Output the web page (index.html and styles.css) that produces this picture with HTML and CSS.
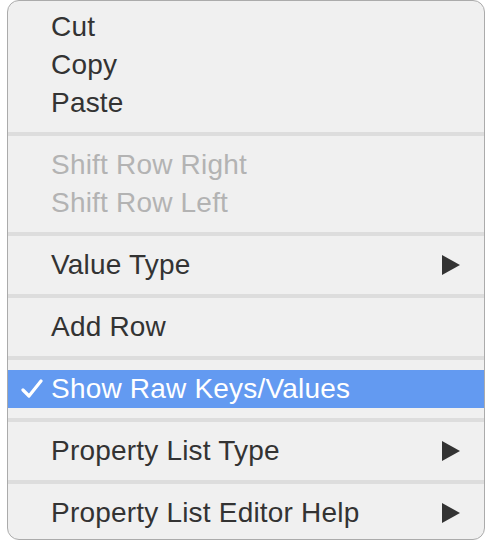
FILE: index.html
```html
<!DOCTYPE html>
<html lang="en">
<head>
    <meta charset="UTF-8">
    <title>Context Menu</title>
    <link rel="stylesheet" href="styles.css">
</head>
<body>
    <div class="menu">
        <div class="item">Cut</div>
        <div class="item">Copy</div>
        <div class="item">Paste</div>
        <div class="separator"></div>
        <div class="item disabled">Shift Row Right</div>
        <div class="item disabled">Shift Row Left</div>
        <div class="separator"></div>
        <div class="item">Value Type <span class="arrow"></span></div>
        <div class="separator"></div>
        <div class="item">Add Row</div>
        <div class="separator"></div>
        <div class="item selected">
            <svg class="check" width="22" height="20" viewBox="0 0 22 20">
                <path d="M2 11 L8 17 L20 2" fill="none" stroke="#fff" stroke-width="3.2" stroke-linecap="round" stroke-linejoin="round"/>
            </svg>
            Show Raw Keys/Values
        </div>
        <div class="separator"></div>
        <div class="item">Property List Type <span class="arrow"></span></div>
        <div class="separator"></div>
        <div class="item">Property List Editor Help <span class="arrow"></span></div>
    </div>
</body>
</html>
```

FILE: styles.css
```css
body {
    margin: 0;
    background: #fff;
    font-family: "Liberation Sans", Arial, sans-serif;
}

.menu {
    margin-left: 7px;
    width: 478px;
    height: 540px;
    box-sizing: border-box;
    background: #f0f0f0;
    border: 1px solid #ababab;
    border-radius: 12px;
    padding: 7px 0 8px;
    overflow: hidden;
}

.item {
    position: relative;
    display: flex;
    align-items: center;
    height: 38px;
    padding: 0 24px 0 43px;
    font-size: 28px;
    letter-spacing: 0.2px;
    color: #333;
}

.item.disabled {
    color: #b3b3b3;
}

.item.selected {
    background: #639af1;
    color: #fff;
}

.check {
    position: absolute;
    left: 13px;
    top: 9px;
}

.separator {
    height: 4px;
    margin: 10px 0;
    background: #dddddd;
}

.arrow {
    margin-left: auto;
    width: 0;
    height: 0;
    border-top: 10px solid transparent;
    border-bottom: 10px solid transparent;
    border-left: 18px solid #333;
}
```
